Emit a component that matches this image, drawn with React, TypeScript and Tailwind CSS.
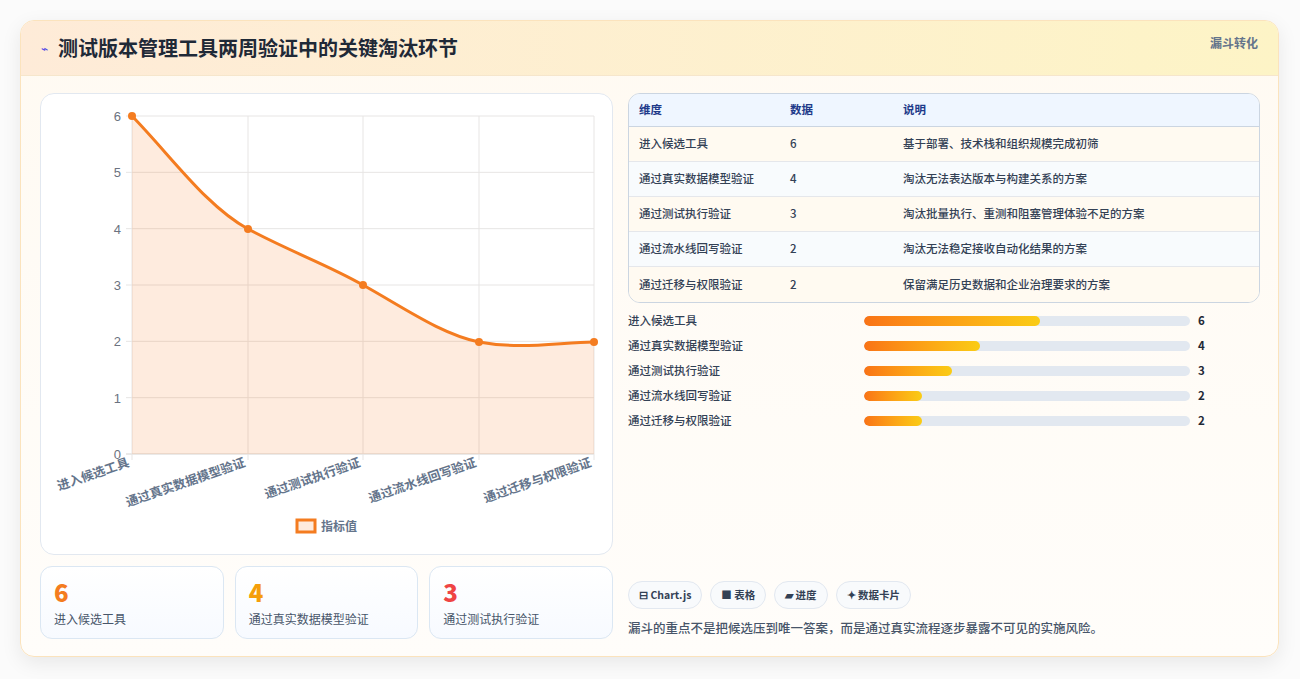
import React from "react";

const rows = [
  ["进入候选工具", "6", "基于部署、技术栈和组织规模完成初筛"],
  ["通过真实数据模型验证", "4", "淘汰无法表达版本与构建关系的方案"],
  ["通过测试执行验证", "3", "淘汰批量执行、重测和阻塞管理体验不足的方案"],
  ["通过流水线回写验证", "2", "淘汰无法稳定接收自动化结果的方案"],
  ["通过迁移与权限验证", "2", "保留满足历史数据和企业治理要求的方案"],
];
const bars = [
  ["进入候选工具", "6", 54],
  ["通过真实数据模型验证", "4", 35.6],
  ["通过测试执行验证", "3", 27],
  ["通过流水线回写验证", "2", 17.8],
  ["通过迁移与权限验证", "2", 17.8],
];

function Chart() {
  const xs = [91, 207, 322, 438, 553];
  const top = 22, base = 360, step = (base - top) / 6;
  const line = "M91,22 C130,62 165,112 207,135 C250,158 285,170 322,191 C365,215 400,240 438,248 C480,256 520,248 553,248";
  return (
    <svg width="572" height="461" className="block">
      {[0, 1, 2, 3, 4, 5, 6].map((k) => (
        <g key={k}>
          <line x1={85} x2={553} y1={base - k * step} y2={base - k * step} stroke={k === 0 ? "#d6d3d1" : "#e7e5e4"} strokeWidth="1" />
          <text x={80} y={base - k * step + 5} textAnchor="end" fontSize="13" fill="#6b7280" fontFamily="Liberation Sans, sans-serif">{k}</text>
        </g>
      ))}
      {xs.map((x, i) => (
        <line key={i} x1={x} x2={x} y1={top} y2={base + 6} stroke="#e7e5e4" strokeWidth="1" />
      ))}
      <path d={line + " L553,360 L91,360 Z"} fill="rgba(249,115,22,0.14)" />
      <path d={line} fill="none" stroke="#f47c20" strokeWidth="3" />
      {[22, 135, 191, 248, 248].map((y, i) => (
        <circle key={i} cx={xs[i]} cy={y} r="4" fill="#f47c20" />
      ))}
      {["进入候选工具", "通过真实数据模型验证", "通过测试执行验证", "通过流水线回写验证", "通过迁移与权限验证"].map((t, i) => (
        <text key={i} x={xs[i] - 2} y={372} textAnchor="end" fontSize="12.5" fontWeight="700" fill="#64748b" transform={`rotate(-19 ${xs[i] - 2} 372)`} fontFamily="'Noto Sans CJK SC', sans-serif">{t}</text>
      ))}
      <rect x={256} y={426} width={18} height={12} fill="rgba(249,115,22,0.14)" stroke="#f47c20" strokeWidth="3" />
      <text x={280} y={437} fontSize="12" fontWeight="700" fill="#64748b" fontFamily="'Noto Sans CJK SC', sans-serif">指标值</text>
    </svg>
  );
}

export default function App() {
  return (
    <div className="w-[1300px] h-[679px] bg-[#fbfbfb] pt-[20px] pl-[20px]" style={{ fontFamily: "'Noto Sans CJK SC', 'Noto Sans', sans-serif" }}>
      <div className="w-[1259px] h-[637px] rounded-[14px] border border-[#fbe3bd] bg-gradient-to-b from-[#fffaf2] to-[#fffdfa] shadow-[0_6px_20px_rgba(0,0,0,0.08)] overflow-hidden flex flex-col">
        <div className="h-[55px] shrink-0 bg-gradient-to-r from-[#feebd8] to-[#fdf4c6] border-b border-[#f6e6cc] flex items-center justify-between pl-[20px] pr-[20px]">
          <div className="flex items-center gap-[10px]">
            <span className="text-[#4f46e5] text-[12px]">⌁</span>
            <span className="text-[20px] font-bold text-[#1f2937]">测试版本管理工具两周验证中的关键淘汰环节</span>
          </div>
          <span className="text-[12px] font-bold text-[#64748b] -mt-[10px]">漏斗转化</span>
        </div>
        <div className="flex gap-[15px] pl-[19px] pr-[18px] pt-[17px]">
          <div className="w-[573px] flex flex-col gap-[11px]">
            <div className="h-[462px] rounded-[14px] border border-[#e2e8f0] bg-white">
              <Chart />
            </div>
            <div className="grid grid-cols-3 gap-[11px]">
              {[["6", "text-[#f47c20]", "进入候选工具"], ["4", "text-[#f59e0b]", "通过真实数据模型验证"], ["3", "text-[#ef4444]", "通过测试执行验证"]].map(([n, c, l]) => (
                <div key={l} className="h-[73px] rounded-[12px] border border-[#dbe7f3] bg-gradient-to-b from-white to-[#f7faff] px-[13px] pt-[10px]">
                  <div className={`text-[24px] font-extrabold leading-[30px] ${c}`}>{n}</div>
                  <div className="text-[12px] text-[#475569] mt-[3px]">{l}</div>
                </div>
              ))}
            </div>
          </div>
          <div className="flex-1 flex flex-col">
            <div className="rounded-[12px] border border-[#cbd5e1] overflow-hidden">
              <div className="h-[33px] bg-[#eff6ff] border-b border-[#cbd5e1] flex items-center text-[11.5px] font-bold text-[#1e3a8a]">
                <div className="w-[161px] pl-[10px]">维度</div>
                <div className="w-[113px]">数据</div>
                <div>说明</div>
              </div>
              {rows.map((r, i) => (
                <div key={i} className={`h-[35px] flex items-center text-[11.5px] font-medium text-[#334155] ${i < 4 ? "border-b border-[#e5e7eb]" : ""} ${i % 2 === 0 ? "bg-[#fffaf1]" : "bg-[#f8fbfd]"}`}>
                  <div className="w-[161px] pl-[10px]">{r[0]}</div>
                  <div className="w-[113px]">{r[1]}</div>
                  <div>{r[2]}</div>
                </div>
              ))}
            </div>
            <div className="mt-[9px] flex flex-col gap-[7px]">
              {bars.map(([l, v, w]) => (
                <div key={l as string} className="flex items-center h-[18px] text-[11.5px] font-medium text-[#334155]">
                  <div className="w-[236px]">{l}</div>
                  <div className="w-[326px] h-[10px] rounded-full bg-[#e2e8f0] overflow-hidden">
                    <div className="h-full rounded-full bg-gradient-to-r from-[#f97316] to-[#facc15]" style={{ width: `${w}%` }} />
                  </div>
                  <div className="ml-[8px] font-bold text-[#1f2937]">{v}</div>
                </div>
              ))}
            </div>
            <div className="mt-[151px] flex gap-[8px]">
              {["⊟ Chart.js", "■ 表格", "▰ 进度", "✦ 数据卡片"].map((t) => (
                <span key={t} className="h-[28px] px-[10px] flex items-center rounded-full border border-[#e2e8f0] bg-[#f8fafc] text-[10.5px] font-bold text-[#334155]">{t}</span>
              ))}
            </div>
            <div className="mt-[10px] text-[12.5px] font-medium text-[#475569]">漏斗的重点不是把候选压到唯一答案，而是通过真实流程逐步暴露不可见的实施风险。</div>
          </div>
        </div>
      </div>
    </div>
  );
}
